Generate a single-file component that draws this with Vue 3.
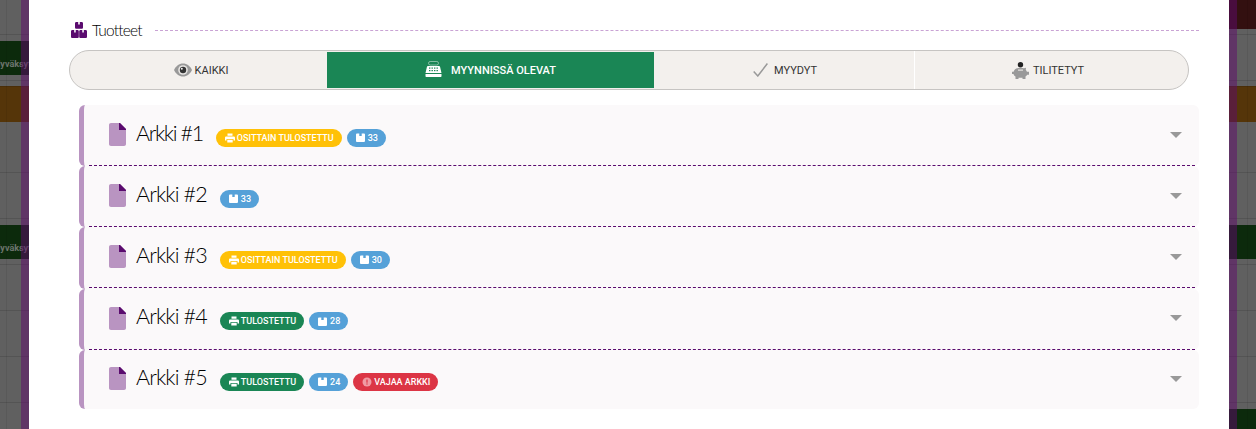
<template>
  <div class="page">
    <div class="side left">
      <div v-for="(row, i) in leftRows" :key="i" class="bg-row" :class="row.type" :style="{ height: row.h + 'px' }">
        <span v-if="row.text">{{ row.text }}</span>
      </div>
      <div class="strip"></div>
    </div>

    <div class="modal">
      <div class="section-title">
        <svg class="boxes" width="16" height="16" viewBox="0 0 16 16">
          <path fill="#5a0b6e" d="M5.500 0h1.700v2.400h1.600V0h1.700C11.500 0 12 .5 12 1.500v3.700c0 1-.5 1.500-1.500 1.500h-5C4.500 6.700 4 6.200 4 5.200V1.500C4 .5 4.500 0 5.500 0z" />
          <path fill="#5a0b6e" d="M1.500 8h1.700v2.400h1.500V8h1.600c1 0 1.500.5 1.500 1.500v5c0 1-.5 1.500-1.500 1.500H1.500C.5 16 0 15.500 0 14.500v-5C0 8.500.5 8 1.500 8zM9.700 8h1.600v2.400h1.500V8h1.700c1 0 1.500.5 1.500 1.500v5c0 1-.5 1.500-1.500 1.500H9.700c-1 0-1.500-.5-1.500-1.500v-5c0-1 .5-1.500 1.500-1.500z" />
        </svg>
        <span>Tuotteet</span>
        <i class="title-line"></i>
      </div>

      <div class="tabs">
        <div class="tab first">
          <svg width="18" height="14" viewBox="0 0 18 14">
            <path fill="#999" d="M0 7C2 3 5 .5 9 .5S16 3 18 7c-2 4-5 6.500-9 6.500S2 11 0 7z" />
            <circle cx="9" cy="7" r="4.800" fill="#e6e4e2" />
            <circle cx="9" cy="7" r="3.200" fill="#333" />
            <circle cx="7.800" cy="5.800" r="1" fill="#eee" />
          </svg>
          KAIKKI
        </div>
        <div class="tab active">
          <svg class="register" width="17" height="16" viewBox="0 0 17 16">
            <rect x="3.500" y=".5" width="10" height="3.500" rx="1.700" fill="none" stroke="#fff" stroke-opacity=".45" />
            <path fill="#fff" d="M3 5h11c.6 0 1 .3 1.100.9l1.400 6H.5l1.400-6C2 5.300 2.400 5 3 5zM.5 13h16v2c0 .6-.4 1-1 1H1.500c-.6 0-1-.4-1-1z" />
            <g fill="#1a8655">
              <rect x="4" y="6.500" width="1.400" height="1.200" /><rect x="6.500" y="6.500" width="1.400" height="1.200" /><rect x="9" y="6.500" width="1.400" height="1.200" /><rect x="11.500" y="6.500" width="1.400" height="1.200" />
              <rect x="4" y="9" width="1.400" height="1.200" /><rect x="6.500" y="9" width="1.400" height="1.200" /><rect x="9" y="9" width="1.400" height="1.200" /><rect x="11.500" y="9" width="1.400" height="1.200" />
            </g>
          </svg>
          MYYNNISSÄ OLEVAT
        </div>
        <div class="tab third">
          <svg width="15" height="14" viewBox="0 0 15 14">
            <path fill="none" stroke="#999" stroke-width="1.500" d="M.7 8.500 4.800 13 14.400.5" />
          </svg>
          MYYDYT
        </div>
        <div class="tab sep">
          <svg width="17" height="17" viewBox="0 0 17 17">
            <circle cx="8.500" cy="2.700" r="2.700" fill="#222" />
            <path fill="#999" d="M2.500 8C3.500 6.500 5.800 5.700 8.500 5.700c1.300 0 2.500.2 3.500.6l2-.6-.2 2.300c.5.500.9 1.100 1.100 1.700H17v3h-1.800c-.4.700-1 1.300-1.700 1.700V17h-3v-1.300H6.500V17h-3v-2.500c-1.100-.7-1.700-1.500-2-2.600H0V9.700h1.600c.2-.6.500-1.200.9-1.700z" />
            <rect x="6" y="7.600" width="5" height="1" fill="#f3f0ed" />
          </svg>
          TILITETYT
        </div>
      </div>

      <div class="sheets">
        <div v-for="sheet in sheets" :key="sheet.name" class="sheet">
          <div class="sheet-head">
            <svg class="file" width="17" height="23" viewBox="0 0 17 23">
              <path fill="#b994c1" d="M2 0h9l6 6v15c0 1.200-.8 2-2 2H2c-1.200 0-2-.8-2-2V2C0 .8.8 0 2 0z" />
              <path fill="#5a0b6e" d="M10 0h1l6 6v1h-7z" />
            </svg>
            <span class="sheet-name">{{ sheet.name }}</span>
            <div class="badges">
              <span v-for="b in sheet.badges" :key="b.text" class="badge" :class="b.color">
                <svg v-if="b.icon === 'print'" width="10" height="10" viewBox="0 0 10 10">
                  <path fill="#fff" d="M2.500.5h5v2.300h-5zM1.300 3.500h7.400c.7 0 1.300.5 1.300 1.200v2.800H8.500V6h-7v1.500H0V4.700c0-.7.600-1.200 1.300-1.200zM2.300 6.700h5.400v2.800H2.300z" />
                </svg>
                <svg v-else-if="b.icon === 'box'" width="9" height="9" viewBox="0 0 9 9">
                  <path fill="#fff" d="M.9.500h2.400v2.400h2.400V.5h2.400c.5 0 .9.400.9.900v6.700c0 .5-.4.900-.9.900H.9c-.5 0-.9-.4-.9-.9V1.400C0 .9.400.5.900.5z" />
                </svg>
                <svg v-else width="10" height="10" viewBox="0 0 10 10">
                  <circle cx="5" cy="5" r="4.500" fill="#f09aa3" />
                  <rect x="4.400" y="2.500" width="1.200" height="3.200" fill="#dc3545" />
                  <rect x="4.400" y="6.400" width="1.200" height="1.200" fill="#dc3545" />
                </svg>
                {{ b.text }}
              </span>
            </div>
            <span class="caret"></span>
          </div>
        </div>
      </div>
    </div>

    <div class="side right">
      <div v-for="(row, i) in rightRows" :key="i" class="bg-row" :class="row.type" :style="{ height: row.h + 'px' }"></div>
      <div class="strip"></div>
    </div>
  </div>
</template>

<script setup>
const printed = { text: 'TULOSTETTU', color: 'green', icon: 'print' }
const partly = { text: 'OSITTAIN TULOSTETTU', color: 'yellow', icon: 'print' }
const count = (n) => ({ text: String(n), color: 'blue', icon: 'box' })

const sheets = [
  { name: 'Arkki #1', badges: [partly, count(33)] },
  { name: 'Arkki #2', badges: [count(33)] },
  { name: 'Arkki #3', badges: [partly, count(30)] },
  { name: 'Arkki #4', badges: [printed, count(28)] },
  { name: 'Arkki #5', badges: [printed, count(24), { text: 'VAJAA ARKKI', color: 'red', icon: 'alert' }] }
]

const leftRows = [
  { h: 35, type: 'line' },
  { h: 6 },
  { h: 34, type: 'dark-green', text: 'Hyväksytty' },
  { h: 6, type: 'line' },
  { h: 5 },
  { h: 36, type: 'orange' },
  { h: 51, type: 'line' },
  { h: 46, type: 'line' },
  { h: 6 },
  { h: 34, type: 'dark-green', text: 'Hyväksytty' },
  { h: 6, type: 'line' },
  { h: 46, type: 'line' },
  { h: 46, type: 'line' },
  { h: 46, type: 'line' },
  { h: 26 }
]

const rightRows = [
  { h: 29, type: 'dark-red' },
  { h: 6, type: 'line' },
  { h: 46, type: 'line' },
  { h: 5 },
  { h: 36, type: 'orange' },
  { h: 51, type: 'line' },
  { h: 46, type: 'line' },
  { h: 6 },
  { h: 34, type: 'dark-green' },
  { h: 6, type: 'line' },
  { h: 46, type: 'line' },
  { h: 46, type: 'line' },
  { h: 46, type: 'line' },
  { h: 6 },
  { h: 20, type: 'dark-green' }
]
</script>

<style scoped>
.page {
  display: grid;
  grid-template-columns: 29px 1200px 27px;
  height: 429px;
  overflow: hidden;
  font-family: Roboto, "Liberation Sans", sans-serif;
}

.side {
  position: relative;
  background: #606060;
  overflow: hidden;
}

.side::after {
  content: "";
  position: absolute;
  top: 0;
  bottom: 0;
  width: 1px;
  background: rgba(0, 0, 0, 0.07);
}

.left::after {
  left: 6px;
}

.right::after {
  left: 18px;
}

.bg-row {
  box-sizing: border-box;
  display: flex;
  align-items: flex-end;
}

.bg-row.line {
  border-bottom: 1px solid #545454;
}

.bg-row.dark-green {
  background: #0c2a0c;
}

.bg-row.orange {
  background: #553509;
  border-top: 1px solid #4a2e08;
}

.bg-row.dark-red {
  background: #331010;
}

.bg-row span {
  margin-left: -6px;
  padding-bottom: 6px;
  font-size: 9px;
  font-weight: 700;
  color: #6d756d;
  white-space: nowrap;
}

.strip {
  position: absolute;
  top: 0;
  bottom: 0;
  width: 8px;
  background: rgba(96, 10, 108, 0.5);
}

.left .strip {
  right: 0;
}

.right .strip {
  left: 0;
}

.modal {
  background: #fff;
  padding: 20px 30px 0 40px;
}

.section-title {
  display: flex;
  align-items: center;
  height: 20px;
  margin-left: 2px;
  font-family: Lato, sans-serif;
  font-size: 15.5px;
  font-weight: 300;
  letter-spacing: -0.8px;
  color: #000;
}

.boxes {
  margin-right: 5px;
}

.title-line {
  flex: 1;
  margin-left: 13px;
  border-top: 1px dashed #c9a3d4;
}

.tabs {
  display: grid;
  grid-template-columns: 257px 327px 260px 1fr;
  box-sizing: border-box;
  height: 40px;
  margin: 10px 10px 0 0;
  border: 1px solid #c6c4c2;
  border-radius: 20px;
  background: #f3f0ed;
  overflow: hidden;
}

.tab {
  display: flex;
  align-items: center;
  justify-content: center;
  gap: 5px;
  font-size: 11px;
  color: #333;
}

.tab.first {
  gap: 3px;
  padding-left: 5px;
}

.tab.active {
  margin: 1px 0;
  gap: 9px;
  background: #1a8655;
  font-weight: 500;
  color: #fff;
}

.tab.third {
  gap: 6px;
  padding-left: 2px;
}

.tab.sep {
  gap: 4px;
  padding-right: 7px;
  border-left: 1px solid #fff;
}

.register {
  margin-top: -3px;
}

.sheets {
  margin: 15px 0 0 10px;
}

.sheet {
  box-sizing: border-box;
  height: 61.2px;
  padding: 0 4px 0.2px 5px;
  background: #fbf9fa;
  border-left: 5px solid #b994c1;
  border-radius: 6px;
}

.sheet:last-child {
  height: 59.2px;
  padding-bottom: 0;
}

.sheet-head {
  display: flex;
  align-items: center;
  height: 100%;
  box-sizing: border-box;
  padding: 0 13px 1px 20px;
  border-bottom: 1px dashed #5a0b6e;
}

.sheet:last-child .sheet-head {
  border-bottom: none;
}

.file {
  margin-right: 10px;
}

.sheet-name {
  margin-bottom: 4px;
  font-family: Lato, sans-serif;
  font-size: 21.5px;
  font-weight: 300;
  letter-spacing: -0.85px;
  color: #000;
}

.sheet:first-child .sheet-name {
  letter-spacing: -1.35px;
}

.badges {
  display: flex;
  gap: 5px;
  margin: 6px 0 0 13px;
}

.badge {
  display: inline-flex;
  align-items: center;
  gap: 2px;
  height: 18px;
  padding: 0 8px 0 9px;
  border-radius: 9px;
  font-size: 9px;
  font-weight: 500;
  color: #fff;
}

.badge.yellow {
  background: #ffc107;
}

.badge.blue {
  gap: 3px;
  background: #55a1d8;
}

.badge.green {
  background: #1a8655;
}

.badge.red {
  background: #dc3545;
}

.caret {
  margin-left: auto;
  border-left: 6px solid transparent;
  border-right: 6px solid transparent;
  border-top: 6px solid #999;
}
</style>

<style>
html,
body {
  margin: 0;
  overflow: hidden;
}
</style>
